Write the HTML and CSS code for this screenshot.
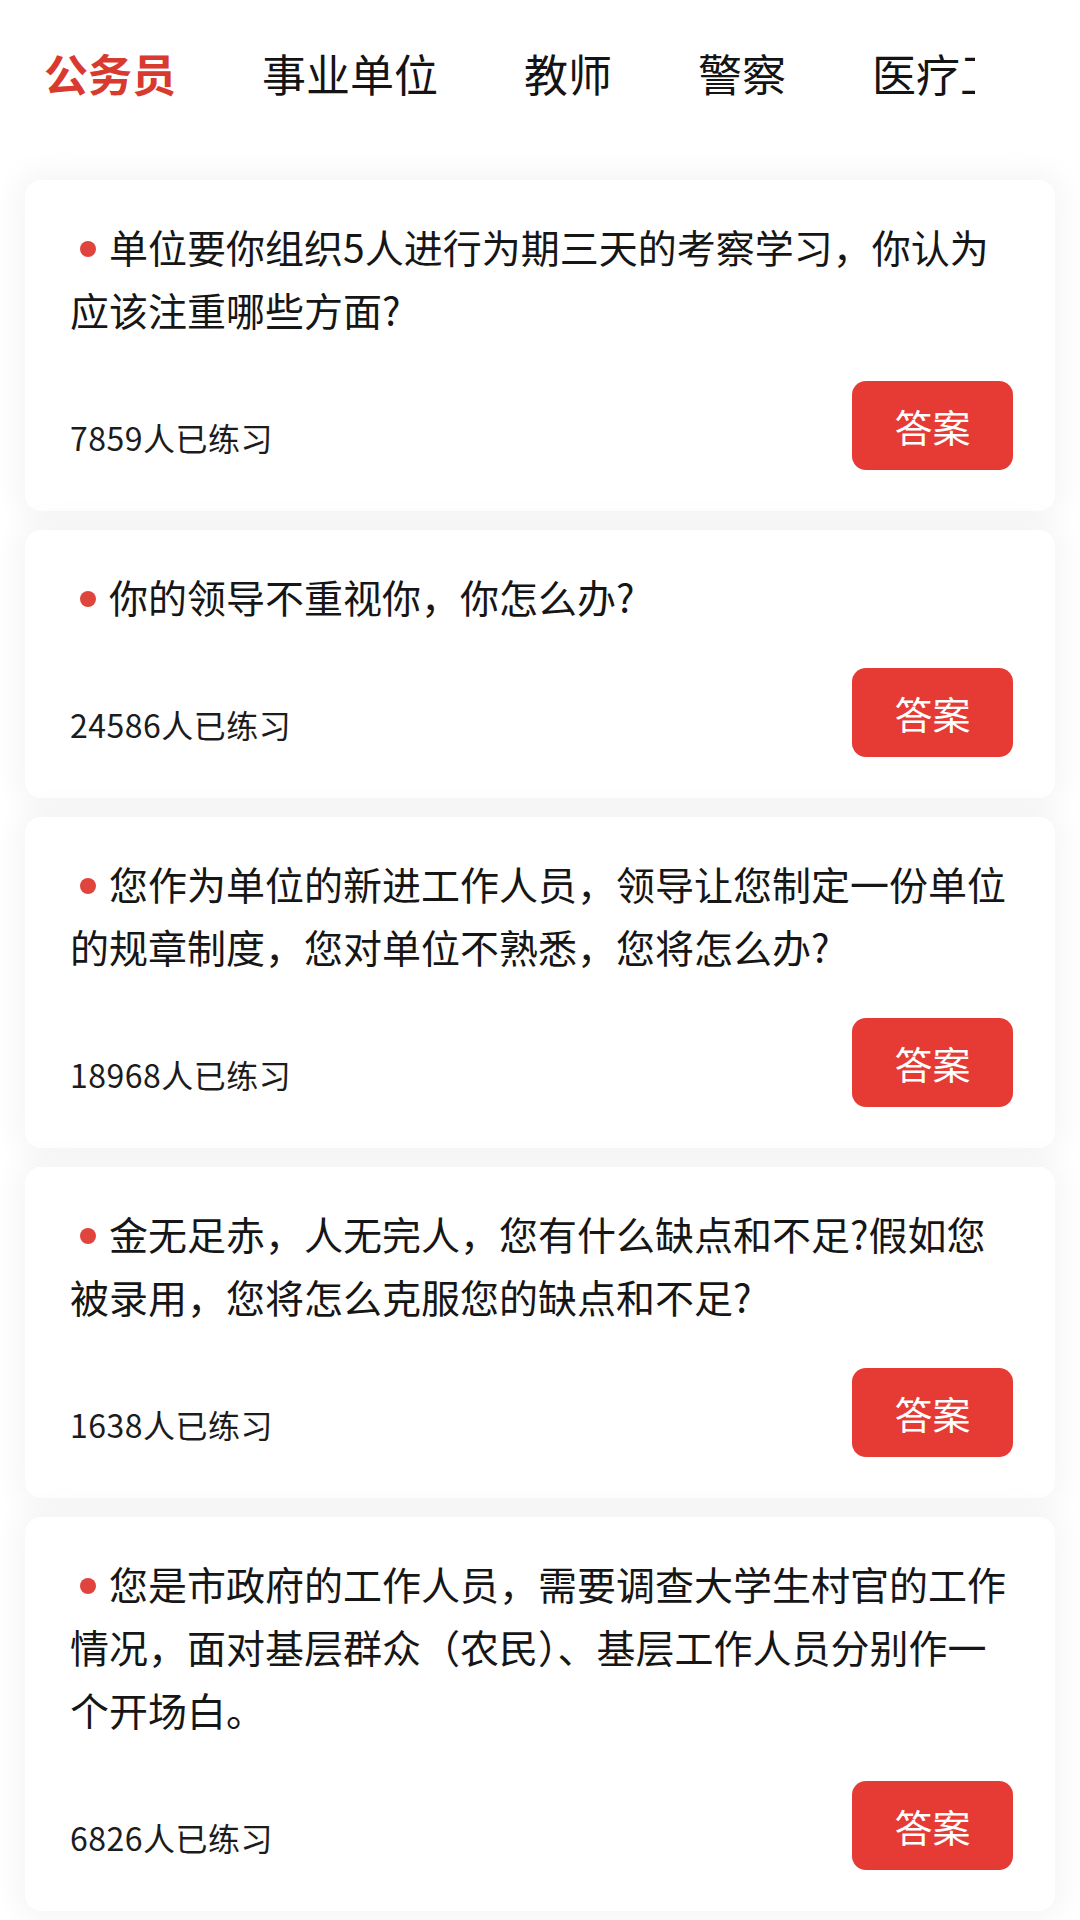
FILE: index.html
```html
<!DOCTYPE html>
<html lang="zh-CN">
<head>
<meta charset="utf-8">
<title>面试题</title>
<link rel="stylesheet" href="styles.css">
</head>
<body>
<header class="tabs">
  <nav class="tab-scroll">
    <span class="tab active">公务员</span>
    <span class="tab">事业单位</span>
    <span class="tab">教师</span>
    <span class="tab">警察</span>
    <span class="tab">医疗卫生</span>
    <span class="tab">银行</span>
  </nav>
  <div class="tab-side"></div>
</header>
<main class="list">
  <section class="card">
    <p class="q"><span class="dot"></span>单位要你组织5人进行为期三天的考察学习，你认为应该注重哪些方面?</p>
    <div class="foot"><span class="count">7859人已练习</span><button class="btn">答案</button></div>
  </section>
  <section class="card">
    <p class="q"><span class="dot"></span>你的领导不重视你，你怎么办?</p>
    <div class="foot"><span class="count">24586人已练习</span><button class="btn">答案</button></div>
  </section>
  <section class="card">
    <p class="q"><span class="dot"></span>您作为单位的新进工作人员，领导让您制定一份单位的规章制度，您对单位不熟悉，您将怎么办?</p>
    <div class="foot"><span class="count">18968人已练习</span><button class="btn">答案</button></div>
  </section>
  <section class="card">
    <p class="q"><span class="dot"></span>金无足赤，人无完人，您有什么缺点和不足?假如您被录用，您将怎么克服您的缺点和不足?</p>
    <div class="foot"><span class="count">1638人已练习</span><button class="btn">答案</button></div>
  </section>
  <section class="card">
    <p class="q"><span class="dot"></span>您是市政府的工作人员，需要调查大学生村官的工作情况，面对基层群众（农民）、基层工作人员分别作一个开场白。</p>
    <div class="foot"><span class="count">6826人已练习</span><button class="btn">答案</button></div>
  </section>
</main>
</body>
</html>
```
FILE: styles.css
```css
* { box-sizing: border-box; }
html, body {
  margin: 0;
  padding: 0;
  background: #ffffff;
  font-family: "Noto Sans CJK SC", "Noto Sans", sans-serif;
  color: #161616;
}
body { width: 1080px; height: 1920px; overflow: hidden; }

.tabs {
  display: flex;
  height: 146px;
  align-items: center;
  background: #fff;
}
.tab-scroll {
  flex: 0 0 975px;
  display: flex;
  gap: 86px;
  padding-left: 44px;
  overflow: hidden;
  white-space: nowrap;
}
.tab {
  flex: none;
  font-size: 44px;
  line-height: 74px;
  color: #141414;
}
.tab.active {
  color: #d93a30;
  font-weight: 700;
}
.tab-side { flex: 1; }

.list {
  padding: 34px 25px 0;
  display: flex;
  flex-direction: column;
  gap: 19px;
}
.card {
  background: #fff;
  border-radius: 16px;
  box-shadow: 0 0 30px 8px rgba(0, 0, 0, 0.045);
  padding: 35px 42px 41px 45px;
}
.q {
  margin: 0;
  font-size: 39px;
  line-height: 63px;
  color: #161616;
}
.dot {
  display: inline-block;
  width: 16px;
  height: 16px;
  border-radius: 50%;
  background: #e0453d;
  margin: 0 13px 0 10px;
  vertical-align: 6px;
}
.foot {
  display: flex;
  align-items: center;
  justify-content: space-between;
  margin-top: 40px;
}
.count {
  font-size: 32px;
  letter-spacing: 0.5px;
  line-height: 40px;
  padding-top: 22px;
  color: #1c1c1c;
}
.btn {
  width: 161px;
  height: 89px;
  border: none;
  border-radius: 14px;
  background: #e63a34;
  color: #fff;
  font-family: "Noto Sans CJK SC", "Noto Sans", sans-serif;
  font-size: 38px;
  padding: 0;
}
```
